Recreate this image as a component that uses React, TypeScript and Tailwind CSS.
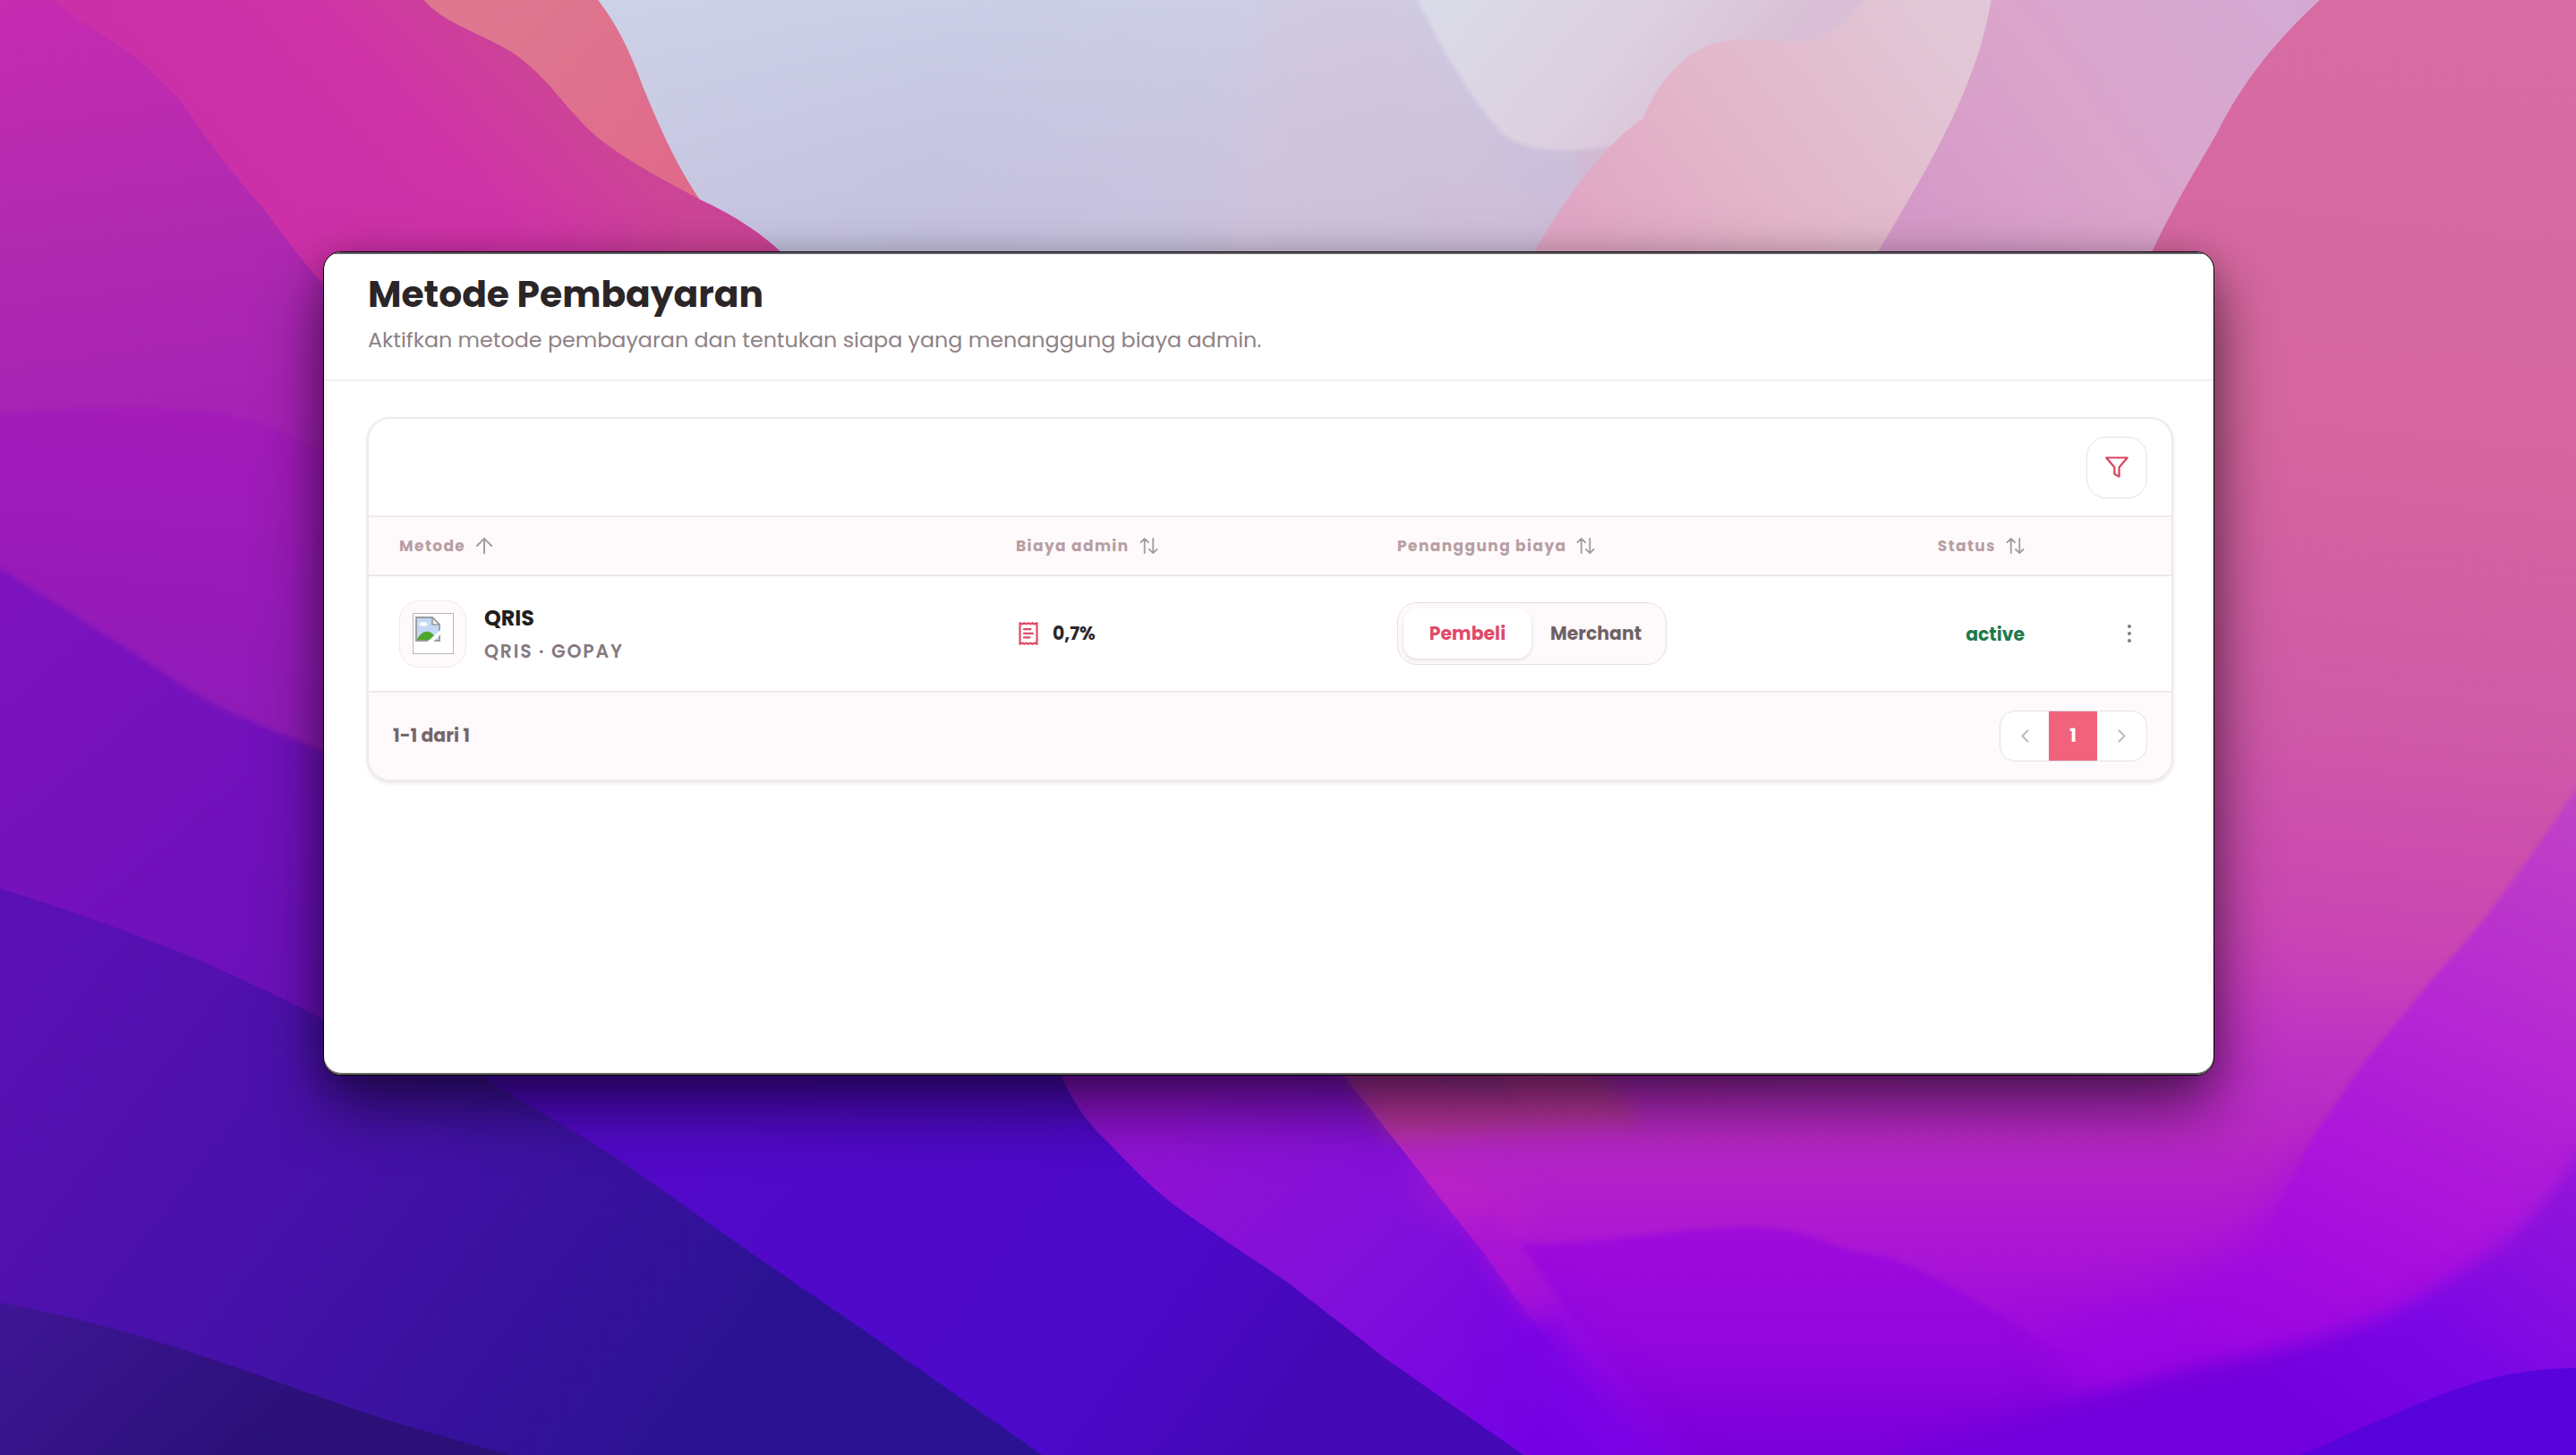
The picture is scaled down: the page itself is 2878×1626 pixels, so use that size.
import type { ReactNode } from "react";
import { ArrowUp, ChevronLeft, ChevronRight } from "lucide-react";

const methods = [
  {
    name: "QRIS",
    channel: "QRIS · GOPAY",
    fee: "0,7%",
    payer: "Pembeli",
    status: "active",
  },
];

const payers = ["Pembeli", "Merchant"];

const rowGrid = "grid grid-cols-[689px_426px_401px_300px_1fr] items-center pl-[34px]";

function Wallpaper() {
  return (
    <svg
      className="absolute inset-0 h-full w-full"
      viewBox="0 0 1568 886"
      preserveAspectRatio="none"
      aria-hidden="true"
    >
      <defs>
        <linearGradient id="sky" x1="365" y1="0" x2="980" y2="150" gradientUnits="userSpaceOnUse">
          <stop offset="0" stopColor="#cccfe6" />
          <stop offset="0.35" stopColor="#c5c5e1" />
          <stop offset="0.65" stopColor="#cec6de" />
          <stop offset="1" stopColor="#d2b8d2" />
        </linearGradient>
        <linearGradient id="skyTop" x1="0" y1="0" x2="0" y2="155" gradientUnits="userSpaceOnUse">
          <stop offset="0" stopColor="#cdd4e9" stopOpacity="0.6" />
          <stop offset="1" stopColor="#c3bbdc" stopOpacity="0.4" />
        </linearGradient>
        <linearGradient id="mist" x1="880" y1="0" x2="1010" y2="110" gradientUnits="userSpaceOnUse">
          <stop offset="0" stopColor="#dadbe8" />
          <stop offset="0.6" stopColor="#ddd0e0" />
          <stop offset="1" stopColor="#d9c0d6" />
        </linearGradient>
        <linearGradient id="blush" x1="1180" y1="0" x2="980" y2="155" gradientUnits="userSpaceOnUse">
          <stop offset="0" stopColor="#e1c8d7" />
          <stop offset="0.6" stopColor="#e3b6c9" />
          <stop offset="1" stopColor="#e0a7c4" />
        </linearGradient>
        <linearGradient id="mauve" x1="1400" y1="0" x2="1190" y2="155" gradientUnits="userSpaceOnUse">
          <stop offset="0" stopColor="#d4aad4" />
          <stop offset="0.6" stopColor="#dba4cb" />
          <stop offset="1" stopColor="#d59ac8" />
        </linearGradient>
        <linearGradient id="rose" x1="1480" y1="0" x2="1400" y2="760" gradientUnits="userSpaceOnUse">
          <stop offset="0" stopColor="#d76ca3" />
          <stop offset="0.35" stopColor="#d6669f" />
          <stop offset="0.58" stopColor="#cf59a7" />
          <stop offset="0.75" stopColor="#ca45b4" />
          <stop offset="0.88" stopColor="#bd2ccb" />
          <stop offset="1" stopColor="#ab12dc" />
        </linearGradient>
        <linearGradient id="coral" x1="300" y1="0" x2="420" y2="110" gradientUnits="userSpaceOnUse">
          <stop offset="0" stopColor="#dd7890" />
          <stop offset="1" stopColor="#e06a8a" />
        </linearGradient>
        <linearGradient id="magenta" x1="330" y1="40" x2="200" y2="160" gradientUnits="userSpaceOnUse">
          <stop offset="0" stopColor="#cc4496" />
          <stop offset="0.45" stopColor="#d033a8" />
          <stop offset="1" stopColor="#cc30a8" />
        </linearGradient>
        <linearGradient id="orchid" x1="0" y1="0" x2="40" y2="300" gradientUnits="userSpaceOnUse">
          <stop offset="0" stopColor="#c62bb0" />
          <stop offset="0.5" stopColor="#b02ab0" />
          <stop offset="1" stopColor="#a320b6" />
        </linearGradient>
        <linearGradient id="violet" x1="60" y1="245" x2="40" y2="470" gradientUnits="userSpaceOnUse">
          <stop offset="0" stopColor="#a31bb9" />
          <stop offset="1" stopColor="#8c1bb9" />
        </linearGradient>
        <linearGradient id="grape" x1="0" y1="380" x2="190" y2="600" gradientUnits="userSpaceOnUse">
          <stop offset="0" stopColor="#7c13be" />
          <stop offset="1" stopColor="#6b10ba" />
        </linearGradient>
        <linearGradient id="indigo" x1="40" y1="560" x2="430" y2="860" gradientUnits="userSpaceOnUse">
          <stop offset="0" stopColor="#5a10b4" />
          <stop offset="0.5" stopColor="#4411a8" />
          <stop offset="1" stopColor="#2a1292" />
        </linearGradient>
        <linearGradient id="night" x1="0" y1="790" x2="120" y2="920" gradientUnits="userSpaceOnUse">
          <stop offset="0" stopColor="#3f1696" />
          <stop offset="1" stopColor="#2b1078" />
        </linearGradient>
        <linearGradient id="ultra" x1="460" y1="680" x2="760" y2="900" gradientUnits="userSpaceOnUse">
          <stop offset="0" stopColor="#5209c8" />
          <stop offset="0.7" stopColor="#4c09c9" />
          <stop offset="1" stopColor="#4408b4" />
        </linearGradient>
        <linearGradient id="band" x1="740" y1="660" x2="940" y2="870" gradientUnits="userSpaceOnUse">
          <stop offset="0" stopColor="#8f12d2" />
          <stop offset="0.5" stopColor="#810fdb" />
          <stop offset="1" stopColor="#7402e4" />
        </linearGradient>
        <linearGradient id="valley" x1="0" y1="600" x2="0" y2="886" gradientUnits="userSpaceOnUse">
          <stop offset="0" stopColor="#bd3ac0" stopOpacity="0" />
          <stop offset="0.32" stopColor="#b828c4" />
          <stop offset="0.55" stopColor="#ac16d4" />
          <stop offset="0.8" stopColor="#9a08e0" />
          <stop offset="1" stopColor="#7c00dc" />
        </linearGradient>
        <linearGradient id="hill" x1="0" y1="748" x2="0" y2="886" gradientUnits="userSpaceOnUse">
          <stop offset="0" stopColor="#9e0cda" />
          <stop offset="0.5" stopColor="#9406de" />
          <stop offset="1" stopColor="#7a00da" />
        </linearGradient>
        <linearGradient id="slope" x1="1568" y1="480" x2="1400" y2="850" gradientUnits="userSpaceOnUse">
          <stop offset="0" stopColor="#c044c4" />
          <stop offset="0.4" stopColor="#b526d4" />
          <stop offset="0.75" stopColor="#a80edd" />
          <stop offset="1" stopColor="#9a06e2" />
        </linearGradient>
        <linearGradient id="foot" x1="1560" y1="720" x2="1440" y2="886" gradientUnits="userSpaceOnUse">
          <stop offset="0" stopColor="#9014da" />
          <stop offset="0.6" stopColor="#7a06e6" />
          <stop offset="1" stopColor="#7200dc" />
        </linearGradient>
        <filter id="soft" x="-30%" y="-30%" width="160%" height="160%" colorInterpolationFilters="sRGB">
          <feGaussianBlur stdDeviation="12" />
        </filter>
        <filter id="medium" x="-30%" y="-30%" width="160%" height="160%" colorInterpolationFilters="sRGB">
          <feGaussianBlur stdDeviation="6" />
        </filter>
        <filter id="haze" x="-20%" y="-20%" width="140%" height="140%" colorInterpolationFilters="sRGB">
          <feGaussianBlur stdDeviation="1.5" />
        </filter>
      </defs>

      <rect width="1568" height="886" fill="url(#rose)" />
      <rect x="300" width="1130" height="400" fill="url(#sky)" />
      <rect x="300" width="660" height="400" fill="url(#skyTop)" />
      <path d="M780 -20C755 60 750 110 735 200H1000L910 100L850 -20Z" fill="#d6c3da" opacity="0.4" filter="url(#soft)" />
      <path d="M858 -10C880 35 895 60 915 82C935 96 965 92 985 88L1180 60V-10Z" fill="url(#mist)" filter="url(#haze)" />
      <path d="M930 160C950 125 972 92 1000 72C1012 45 1030 25 1058 24C1085 24 1095 28 1110 22C1122 15 1130 8 1136 -2H1230V200H930Z" fill="url(#blush)" />
      <path d="M1212 0C1203 55 1172 105 1139 160V200H1420V0Z" fill="url(#mauve)" />
      <path d="M1412 0C1385 25 1365 50 1350 80C1333 110 1320 130 1306 162V900H1568V0Z" fill="url(#rose)" />

      <path d="M255 0H364C376 15 385 35 391 52C401 76 411 100 427 123L440 200H200Z" fill="url(#coral)" />
      <path d="M0 0H258C270 14 292 20 312 32C332 46 340 60 352 72C365 88 390 102 425 121C445 130 464 142 478 156V300H0Z" fill="url(#magenta)" />
      <path d="M0 0H32C55 18 68 24 80 33C100 50 112 62 122 79C135 98 150 115 162 129C172 142 180 155 200 176V500H0Z" fill="url(#orchid)" />
      <path d="M-10 253C45 247 100 247 135 252C160 257 175 264 210 282V650H-10Z" fill="url(#violet)" filter="url(#haze)" />
      <path d="M-10 340C30 365 70 390 100 410C130 432 160 442 210 463V700H-10Z" fill="url(#grape)" filter="url(#haze)" />
      <path d="M-10 538C50 556 90 572 120 584C150 598 170 606 210 628V655H300L380 708L700 900H-10Z" fill="url(#indigo)" />
      <path d="M0 793C80 808 150 835 210 856C250 870 290 880 325 890H0Z" fill="url(#night)" />
      <path d="M280 645L300 660C340 684 355 692 380 708L440 751L530 813L640 890H940L760 640Z" fill="url(#ultra)" />
      <path d="M640 640C650 668 660 682 675 696C690 712 700 722 715 734C740 752 765 768 784 781L843 827L933 890H1100L900 640Z" fill="url(#band)" />
      <path d="M806 600V640L848 693L884 739L904 764C930 802 960 842 1010 890H1568V600Z" fill="url(#valley)" />
      <path d="M813 645L846 692C880 694 940 684 1000 684L960 640Z" fill="#c24a60" opacity="0.4" filter="url(#medium)" />
      <path d="M865 712C880 728 900 738 930 744" stroke="#cb2abf" strokeWidth="16" fill="none" opacity="0.5" filter="url(#soft)" />
      <path d="M1050 900C990 850 955 800 925 758C985 757 1020 748 1062 747.5C1105 747 1110 761 1145 765C1180 775 1200 792 1250 820L1340 840L1430 960H1050Z" fill="url(#hill)" filter="url(#haze)" />
      <path d="M1404 700C1380 750 1340 790 1240 812C1270 850 1290 870 1300 950H1600V700Z" fill="url(#slope)" filter="url(#soft)" />
      <path d="M1600 430L1568 480C1535 530 1510 565 1484 592C1462 620 1448 635 1434 654C1420 675 1412 685 1404 700C1398 715 1390 728 1382 745L1600 900Z" fill="url(#slope)" filter="url(#haze)" />
      <path d="M925 800C950 835 985 880 1035 930" stroke="#7c04e6" strokeWidth="34" fill="none" filter="url(#soft)" />
      <path d="M900 742C915 765 925 780 940 800" stroke="#a814d4" strokeWidth="20" fill="none" opacity="0.6" filter="url(#medium)" />
      <path d="M1620 640L1568 706C1556 722 1545 736 1534 748C1518 762 1500 774 1484 782C1468 794 1450 802 1434 807C1400 820 1360 828 1334 833C1280 846 1230 862 1160 880V930H1620Z" fill="url(#foot)" filter="url(#medium)" />
      <path d="M1568 833C1530 834 1510 840 1484 850C1460 860 1450 864 1434 871C1418 879 1405 884 1389 890H1568Z" fill="#5803dc" />
    </svg>
  );
}

function SortIcon() {
  return (
    <svg
      className="h-[20px] w-[21px]"
      viewBox="0 0 22 20"
      fill="none"
      stroke="#a39a9c"
      strokeWidth="1.9"
      strokeLinecap="round"
      strokeLinejoin="round"
    >
      <path d="M6 18.5V1.5M1.5 6L6 1.5L10.5 6M16 1.5V18.5M11.5 14L16 18.5L20.5 14" />
    </svg>
  );
}

function ReceiptIcon() {
  return (
    <svg
      className="h-[26px] w-[22px]"
      viewBox="0 0 22 26"
      fill="none"
      stroke="#e04a68"
      strokeWidth="2.2"
      strokeLinejoin="round"
      strokeLinecap="round"
    >
      <path d="M1.5 1.2L4.2 2.4L6.5 1.2L8.8 2.4L11 1.2L13.2 2.4L15.5 1.2L17.8 2.4L20.5 1.2V24.8L17.8 23.6L15.5 24.8L13.2 23.6L11 24.8L8.8 23.6L6.5 24.8L4.2 23.6L1.5 24.8Z" />
      <path d="M6 8.2H13.5M6 12.8H16M6 17.4H12.5" />
    </svg>
  );
}

function FunnelIcon() {
  return (
    <svg
      className="h-[26px] w-[26px]"
      viewBox="0 0 26 26"
      fill="none"
      stroke="#d9435f"
      strokeWidth="2.2"
      strokeLinejoin="round"
    >
      <path d="M1.2 2.5H24.8L15.6 13.2V23.6L10.4 20.8V13.2Z" />
    </svg>
  );
}

function BrokenImage() {
  return (
    <div className="h-[46px] w-[46px] border border-[#b9b5b9] bg-white pt-[2.5px] pl-[2.5px]">
      <svg className="h-[28px] w-[28px]" viewBox="0 0 28 28">
        <path d="M1 1H19L27 9V27H1Z" fill="#c3d9f5" />
        <ellipse cx="9" cy="8.5" rx="4.5" ry="2.2" fill="#fff" />
        <path d="M1 27C5 19 10 16 15 17C19 18 22 22 24 27Z" fill="#4fa82e" />
        <path d="M1 1H19L27 9V27H1Z" fill="none" stroke="#9a9a9e" strokeWidth="1.8" />
        <path d="M19 1V9H27Z" fill="#f4f4f6" stroke="#9a9a9e" strokeWidth="1.6" />
        <path d="M29 14V19L19.5 29H12.5Z" fill="#fff" />
      </svg>
    </div>
  );
}

function HeaderCell({ label, children }: { label: string; children: ReactNode }) {
  return (
    <div className="flex items-center gap-[11px]">
      <span className="pt-[2px] text-[17px] font-bold tracking-[1.4px] text-[#b79fa3]">{label}</span>
      {children}
    </div>
  );
}

export default function App() {
  return (
    <div className="relative h-[1626px] w-[2878px] overflow-hidden font-['Poppins','Inter',sans-serif]">
      <Wallpaper />

      <main className="relative mt-[281px] ml-[361px] h-[921px] w-[2113px] overflow-hidden rounded-[20px] border border-black bg-white shadow-[inset_0_-2px_0_#6b6b6b,0_32px_70px_rgba(0,0,0,0.6),0_4px_30px_rgba(0,0,0,0.15)]">
        <header className="h-[144px] border-t-2 border-b-2 border-t-[#6b6570] border-b-[#f1eeef] pt-[20px] pl-[49px]">
          <h1 className="text-[40.8px] leading-[50px] font-bold text-[#2b2527]">
            Metode Pembayaran
          </h1>
          <p className="mt-[8px] text-[23.8px] leading-[36px] text-[#8e8285]">
            Aktifkan metode pembayaran dan tentukan siapa yang menanggung biaya admin.
          </p>
        </header>

        <section className="mt-[40px] ml-[48px] w-[2018px] overflow-hidden rounded-[26px] border-2 border-[#f0e9eb] bg-white shadow-[0_2px_4px_rgba(60,20,30,0.12)]">
          <div className="flex h-[110px] items-center justify-end border-b-2 border-[#eeeaeb] pr-[27px]">
            <button className="flex h-[69px] w-[68px] items-center justify-center rounded-[22px] border-[1.5px] border-[#e9dfe2] bg-white">
              <FunnelIcon />
            </button>
          </div>

          <div className={`${rowGrid} h-[66px] border-b-2 border-[#ece7e9] bg-[#fefafb]`}>
            <HeaderCell label="Metode">
              <ArrowUp className="-ml-[4px] h-[28px] w-[28px] text-[#a39a9c]" strokeWidth={1.7} />
            </HeaderCell>
            <HeaderCell label="Biaya admin">
              <SortIcon />
            </HeaderCell>
            <HeaderCell label="Penanggung biaya">
              <SortIcon />
            </HeaderCell>
            <div className="flex justify-end">
              <HeaderCell label="Status">
                <SortIcon />
              </HeaderCell>
            </div>
          </div>

          {methods.map((method) => (
            <div key={method.name} className={`${rowGrid} h-[130px] border-b-2 border-[#eeeaeb]`}>
              <div className="flex items-center gap-[20px]">
                <div className="flex h-[75px] w-[75px] items-center justify-center rounded-[22px] border-[1.5px] border-[#f5e6e9] bg-[#fefafb]">
                  <BrokenImage />
                </div>
                <div className="pt-[2px]">
                  <div className="text-[23.8px] leading-[34px] font-bold text-[#221e20]">{method.name}</div>
                  <div className="mt-[4px] text-[20.4px] leading-[32px] font-semibold tracking-[1.8px] text-[#86797d]">
                    {method.channel}
                  </div>
                </div>
              </div>
              <div className="flex items-center gap-[16px] pl-[3px]">
                <ReceiptIcon />
                <span className="text-[20.4px] font-bold text-[#2b2628]">{method.fee}</span>
              </div>
              <div className="flex">
                <div className="flex h-[70px] rounded-[22px] border-[1.5px] border-[#eadde1] bg-[#fef9fa] p-[6px]">
                  {payers.map((payer) => (
                    <button
                      key={payer}
                      className={
                        payer === method.payer
                          ? "w-[143px] rounded-[16px] bg-white text-[20.4px] font-bold text-[#e04a68] shadow-[0_2px_4px_rgba(60,20,30,0.12)]"
                          : "w-[144px] rounded-[16px] text-[20.4px] font-bold text-[#6f6165]"
                      }
                    >
                      {payer}
                    </button>
                  ))}
                </div>
              </div>
              <div className="pt-[2px] text-right text-[20.4px] font-bold text-[#1f7a4d]">{method.status}</div>
              <div className="flex justify-center pl-[70px]">
                <button className="flex flex-col gap-[4px]">
                  <span className="size-[4px] rounded-full bg-[#85797d]" />
                  <span className="size-[4px] rounded-full bg-[#85797d]" />
                  <span className="size-[4px] rounded-full bg-[#85797d]" />
                </button>
              </div>
            </div>
          ))}

          <div className="flex h-[97px] items-center justify-between bg-[#fefafb] pr-[27px] pl-[27px]">
            <span className="text-[20.4px] font-bold text-[#74666a]">1-1 dari 1</span>
            <div className="flex h-[57px] w-[165px] overflow-hidden rounded-[18px] border-[1.5px] border-[#e6dee1] bg-white">
              <button className="flex w-[54px] items-center justify-center">
                <ChevronLeft className="h-[25px] w-[25px] text-[#bdb8ba]" strokeWidth={1.8} />
              </button>
              <span className="flex w-[54px] items-center justify-center bg-[#f1637c] text-[20.4px] font-bold text-white">
                1
              </span>
              <button className="flex flex-1 items-center justify-center">
                <ChevronRight className="h-[25px] w-[25px] text-[#bdb8ba]" strokeWidth={1.8} />
              </button>
            </div>
          </div>
        </section>
      </main>
    </div>
  );
}
